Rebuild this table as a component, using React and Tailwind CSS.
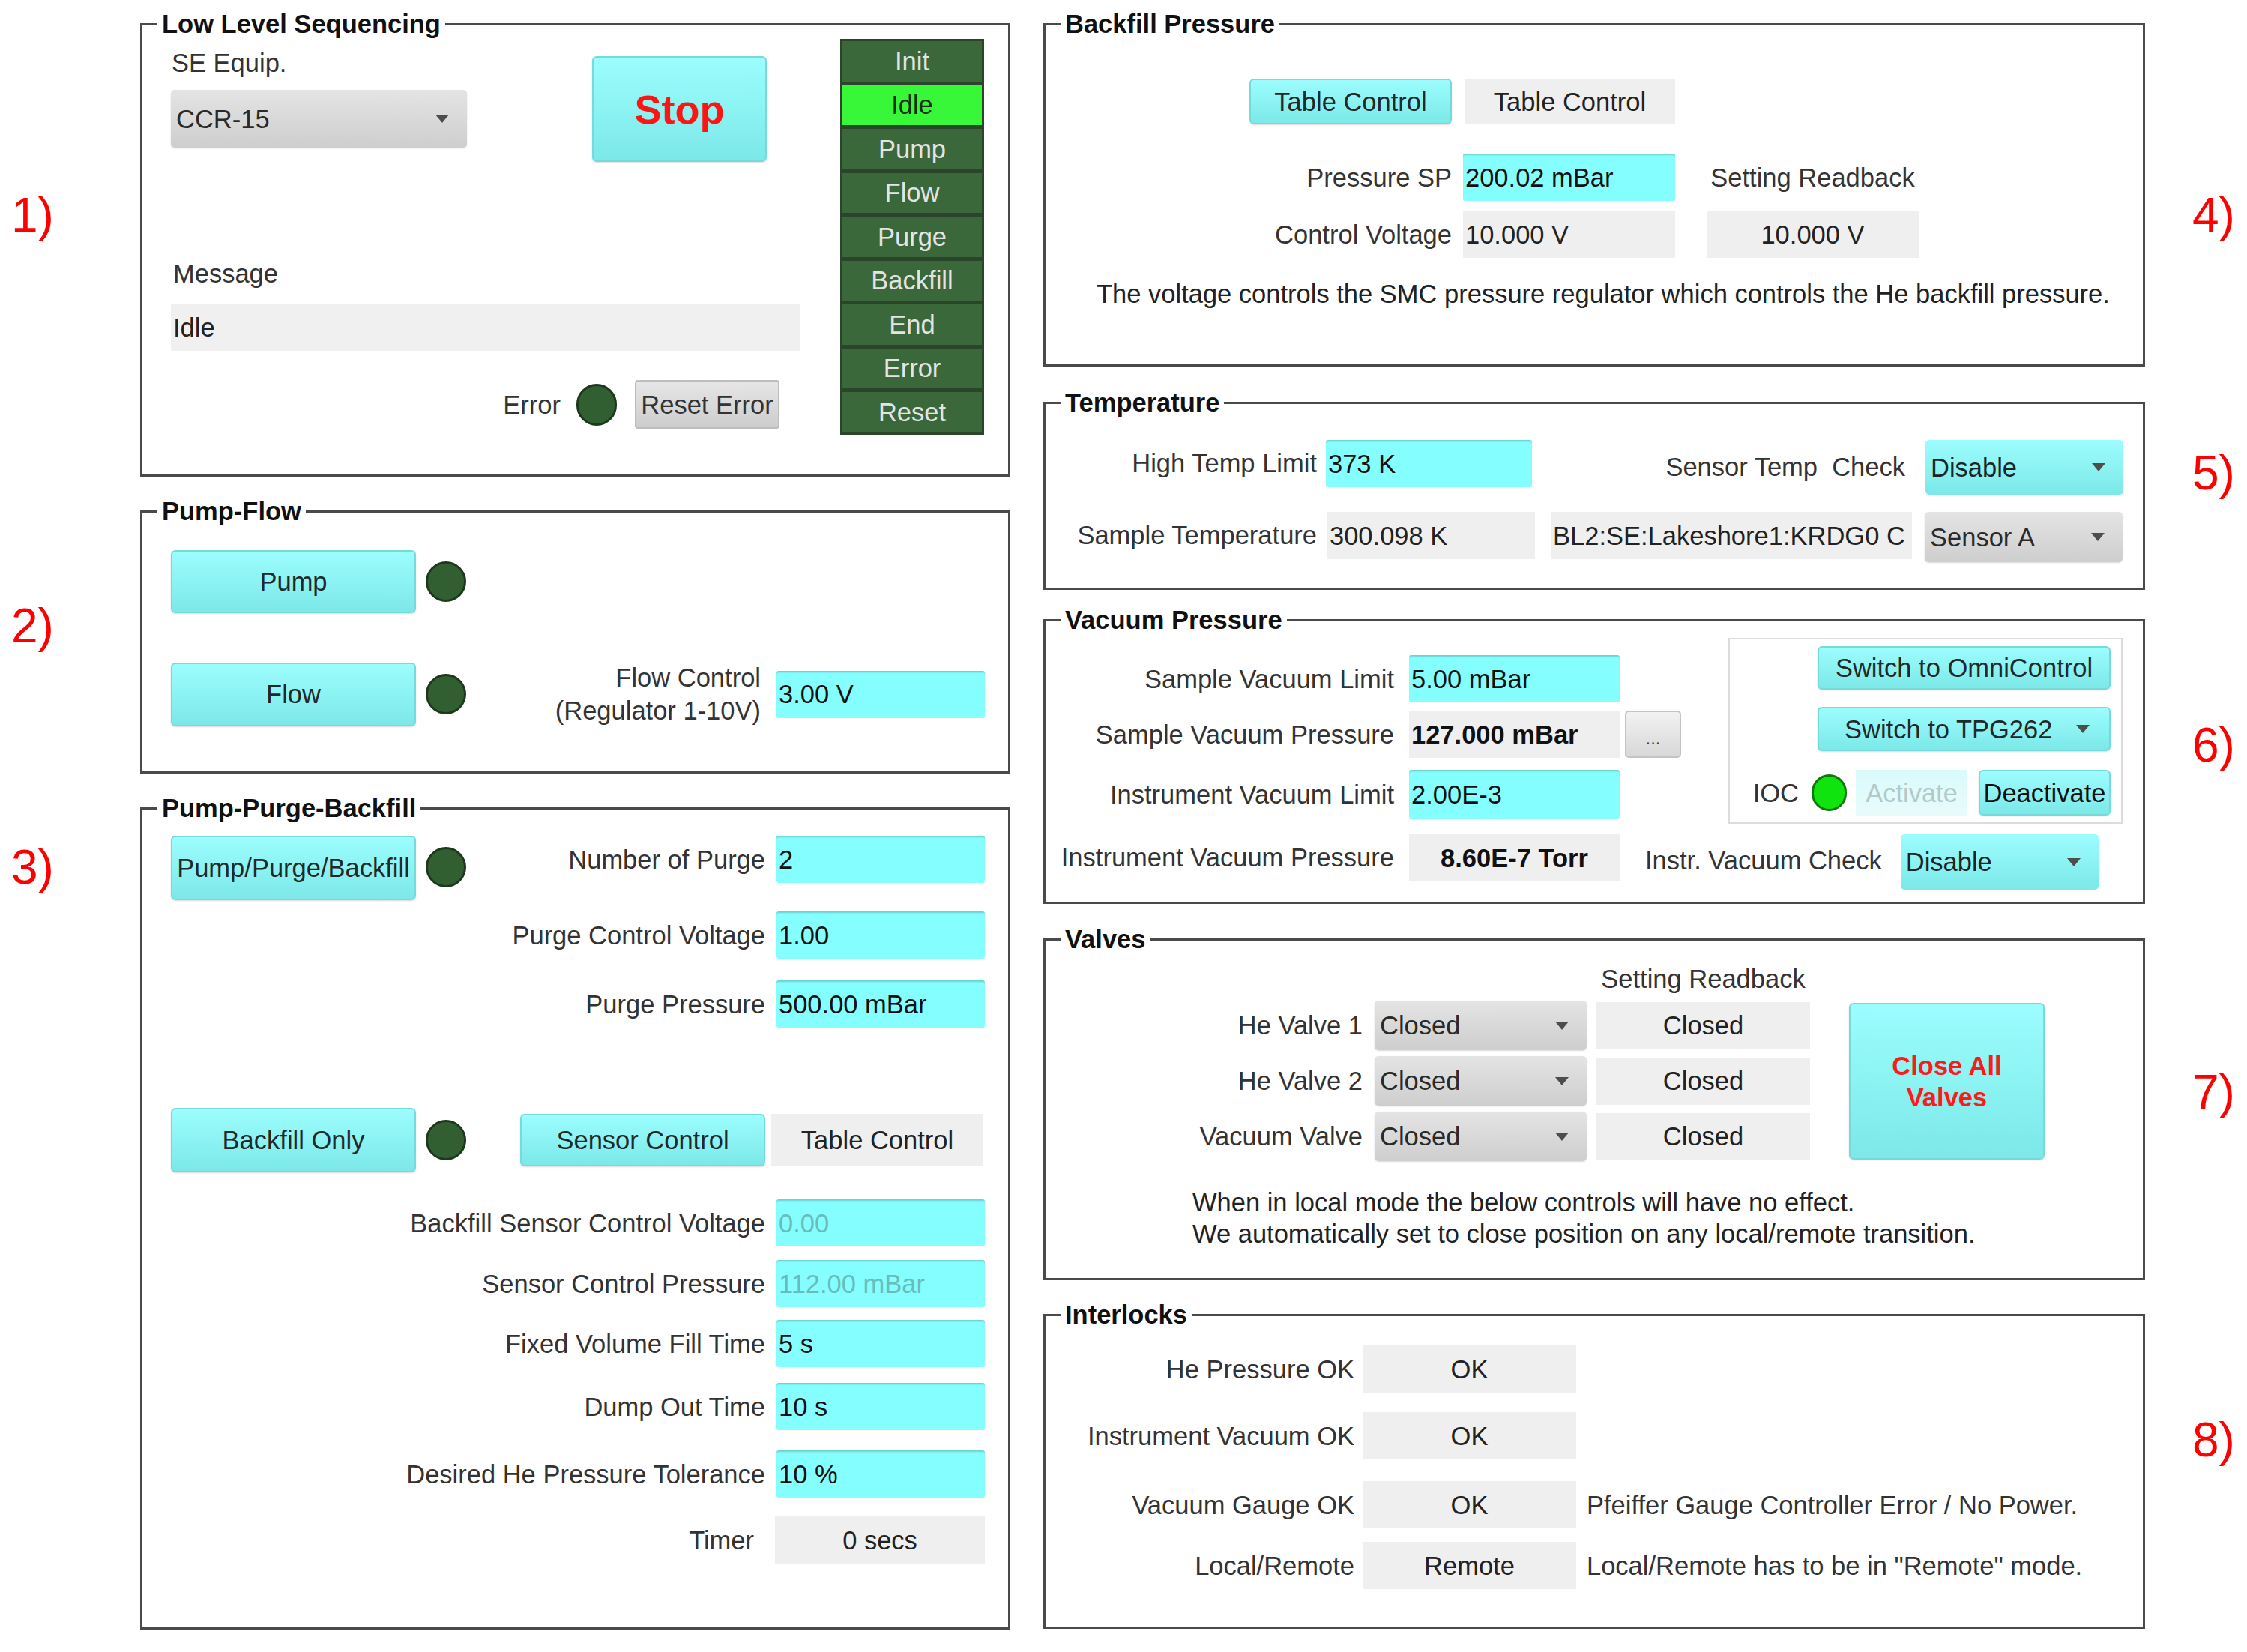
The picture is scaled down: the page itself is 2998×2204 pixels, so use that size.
import React from "react";

function Panel({ title, className = "", children }) {
  return (
    <div className={`relative border-[3px] border-[#4a4a4a] ${className}`}>
      <span className="absolute left-[20px] -top-[22px] bg-white px-[6px] text-[34.5px] leading-[40px] font-bold text-[#111] whitespace-nowrap">
        {title}
      </span>
      {children}
    </div>
  );
}

function CyanBtn({ className = "", children }) {
  return (
    <div
      className={`flex items-center justify-center rounded-[6px] border-2 border-[#74dada] bg-gradient-to-b from-[#9cfdfd] to-[#7ce8e8] text-[#1e2a2a] shadow-[0_1px_2px_rgba(0,0,0,0.15)] whitespace-nowrap ${className}`}
    >
      {children}
    </div>
  );
}

function Arrow() {
  return (
    <svg width="18" height="11" viewBox="0 0 18 11" className="shrink-0">
      <polygon points="0,0 18,0 9,11" fill="#4d4d4d" />
    </svg>
  );
}

function GrayDrop({ className = "", text }) {
  return (
    <div
      className={`flex items-center rounded-[5px] bg-gradient-to-b from-[#e4e4e4] to-[#cecece] pl-[7px] pr-[24px] text-[#2a2a2a] shadow-[0_1px_2px_rgba(0,0,0,0.15)] ${className}`}
    >
      <span>{text}</span>
      <span className="ml-auto flex">
        <Arrow />
      </span>
    </div>
  );
}

function CyanDrop({ className = "", text }) {
  return (
    <div
      className={`flex items-center rounded-[5px] bg-gradient-to-b from-[#9cfdfd] to-[#7ce8e8] pl-[7px] pr-[24px] text-[#1a2626] ${className}`}
    >
      <span>{text}</span>
      <span className="ml-auto flex">
        <Arrow />
      </span>
    </div>
  );
}

function Input({ className = "", faded = false, children }) {
  return (
    <div
      className={`flex items-center rounded-[3px] bg-[#84fefe] pl-[3px] shadow-[inset_0_3px_2px_-1px_rgba(0,0,0,0.18)] whitespace-nowrap ${
        faded ? "text-[#68bcbc]" : "text-[#111]"
      } ${className}`}
    >
      {children}
    </div>
  );
}

function Readout({ className = "", children }) {
  return (
    <div className={`flex items-center bg-[#efefef] whitespace-nowrap ${className}`}>
      {children}
    </div>
  );
}

function Led({ className = "" }) {
  return (
    <div
      className={`w-[54px] h-[54px] shrink-0 rounded-full bg-[#325f32] border-[3px] border-[#1e381e] ${className}`}
    />
  );
}

function Label({ className = "", children }) {
  return <div className={`text-right text-[#333] whitespace-nowrap ${className}`}>{children}</div>;
}

const states = ["Init", "Idle", "Pump", "Flow", "Purge", "Backfill", "End", "Error", "Reset"];

export default function App() {
  return (
    <div className="w-[2998px] h-[2204px] bg-white flex font-['Liberation_Sans',Arial,sans-serif] text-[34.5px] leading-[40px] text-[#222] overflow-hidden">
      {/* left gutter */}
      <div className="w-[187px] shrink-0 flex flex-col pl-[15px] text-[64px] leading-[64px] text-[#ff0000]">
        <div className="mt-[255px]">1)</div>
        <div className="mt-[484px]">2)</div>
        <div className="mt-[258px]">3)</div>
      </div>

      {/* left column */}
      <div className="w-[1161px] shrink-0 flex flex-col pt-[31px]">
        {/* 1 Low Level Sequencing */}
        <Panel title="Low Level Sequencing" className="h-[605px]">
          <div className="flex">
            <div className="w-[931px] pl-[38px] flex flex-col">
              <div className="flex mt-[30px]">
                <div className="flex flex-col w-[395px]">
                  <div className="h-[40px] pl-[1px] text-[#333]">SE Equip.</div>
                  <GrayDrop className="mt-[16px] w-[395px] h-[77px]" text="CCR-15" />
                </div>
                <CyanBtn className="ml-[167px] mt-[11px] w-[233px] h-[141px]">
                  <span className="text-[54px] leading-[60px] font-bold text-[#ff1414]">Stop</span>
                </CyanBtn>
              </div>
              <div className="mt-[129px] ml-[3px] h-[40px] text-[#333]">Message</div>
              <Readout className="mt-[20px] w-[839px] h-[63px] pl-[3px] bg-[#f0f0f0]">Idle</Readout>
              <div className="mt-[39px] w-[812px] flex items-center justify-end">
                <span className="text-[#333]">Error</span>
                <Led className="ml-[21px] w-[52px] h-[56px]" />
                <div className="ml-[24px] w-[193px] h-[65px] flex items-center justify-center rounded-[4px] border-2 border-[#bdbdbd] bg-gradient-to-b from-[#e6e6e6] to-[#cdcdcd] text-[#333] whitespace-nowrap">
                  Reset Error
                </div>
              </div>
            </div>
            <div className="mt-[18px] w-[192px] bg-[#2a452a] p-[3px] flex flex-col gap-[5px]">
              {states.map((s) => (
                <div
                  key={s}
                  className={
                    s === "Idle"
                      ? "h-[53.5px] flex items-center justify-center bg-[#38f738] text-[#123012]"
                      : "h-[53.5px] flex items-center justify-center bg-[#3a683a] text-[#e4e4e4]"
                  }
                >
                  {s}
                </div>
              ))}
            </div>
          </div>
        </Panel>

        {/* 2 Pump-Flow */}
        <Panel title="Pump-Flow" className="mt-[45px] h-[351px]">
          <div className="flex flex-col pl-[38px] pr-[31px]">
            <div className="mt-[50px] flex items-center">
              <CyanBtn className="w-[327px] h-[84px]">Pump</CyanBtn>
              <Led className="ml-[13px]" />
            </div>
            <div className="mt-[64px] flex items-center">
              <CyanBtn className="w-[327px] h-[85px]">Flow</CyanBtn>
              <Led className="ml-[13px]" />
              <Label className="ml-auto leading-[44px]">
                Flow Control
                <br />
                (Regulator 1-10V)
              </Label>
              <Input className="ml-[21px] w-[278px] h-[63px]">3.00 V</Input>
            </div>
          </div>
        </Panel>

        {/* 3 Pump-Purge-Backfill */}
        <Panel title="Pump-Purge-Backfill" className="mt-[45px] h-[1097px]">
          <div className="flex flex-col pl-[38px] pr-[31px]">
            <div className="mt-[35px] flex items-start">
              <CyanBtn className="w-[327px] h-[86px]">Pump/Purge/Backfill</CyanBtn>
              <Led className="ml-[13px] mt-[15px]" />
              <div className="ml-auto flex items-center">
                <Label className="mr-[15px]">Number of Purge</Label>
                <Input className="w-[278px] h-[63px]">2</Input>
              </div>
            </div>
            <div className="mt-[15px] flex items-center justify-end">
              <Label className="mr-[15px]">Purge Control Voltage</Label>
              <Input className="w-[278px] h-[63px]">1.00</Input>
            </div>
            <div className="mt-[29px] flex items-center justify-end">
              <Label className="mr-[15px]">Purge Pressure</Label>
              <Input className="w-[278px] h-[63px]">500.00 mBar</Input>
            </div>
            <div className="mt-[107px] flex items-center">
              <CyanBtn className="w-[327px] h-[86px]">Backfill Only</CyanBtn>
              <Led className="ml-[13px]" />
              <CyanBtn className="ml-[72px] w-[327px] h-[70px]">Sensor Control</CyanBtn>
              <Readout className="ml-[8px] w-[283px] h-[70px] justify-center">Table Control</Readout>
            </div>
            <div className="mt-[36px] flex items-center justify-end">
              <Label className="mr-[15px]">Backfill Sensor Control Voltage</Label>
              <Input faded className="w-[278px] h-[63px]">0.00</Input>
            </div>
            <div className="mt-[18px] flex items-center justify-end">
              <Label className="mr-[15px]">Sensor Control Pressure</Label>
              <Input faded className="w-[278px] h-[63px]">112.00 mBar</Input>
            </div>
            <div className="mt-[17px] flex items-center justify-end">
              <Label className="mr-[15px]">Fixed Volume Fill Time</Label>
              <Input className="w-[278px] h-[63px]">5 s</Input>
            </div>
            <div className="mt-[21px] flex items-center justify-end">
              <Label className="mr-[15px]">Dump Out Time</Label>
              <Input className="w-[278px] h-[63px]">10 s</Input>
            </div>
            <div className="mt-[27px] flex items-center justify-end">
              <Label className="mr-[15px]">Desired He Pressure Tolerance</Label>
              <Input className="w-[278px] h-[63px]">10 %</Input>
            </div>
            <div className="mt-[25px] flex items-center justify-end">
              <Label className="mr-[28px]">Timer</Label>
              <Readout className="w-[280px] h-[63px] justify-center">0 secs</Readout>
            </div>
          </div>
        </Panel>
      </div>

      {/* gap */}
      <div className="w-[44px] shrink-0" />

      {/* right column */}
      <div className="w-[1470px] shrink-0 flex flex-col pt-[31px]">
        {/* 4 Backfill Pressure */}
        <Panel title="Backfill Pressure" className="h-[458px]">
          <div className="flex flex-col">
            <div className="mt-[71px] ml-[272px] flex">
              <CyanBtn className="w-[270px] h-[61px]">Table Control</CyanBtn>
              <Readout className="ml-[17px] w-[281px] h-[61px] justify-center">Table Control</Readout>
            </div>
            <div className="mt-[39px] flex items-center">
              <Label className="w-[557px] pr-[15px]">Pressure SP</Label>
              <Input className="w-[283px] h-[63px]">200.02 mBar</Input>
              <div className="ml-[42px] w-[283px] text-center text-[#333] whitespace-nowrap">Setting Readback</div>
            </div>
            <div className="mt-[13px] flex items-center">
              <Label className="w-[557px] pr-[15px]">Control Voltage</Label>
              <Readout className="w-[283px] h-[63px] pl-[3px]">10.000 V</Readout>
              <Readout className="ml-[42px] w-[283px] h-[63px] justify-center">10.000 V</Readout>
            </div>
            <div className="mt-[28px] ml-[68px] text-[#222] whitespace-nowrap">
              The voltage controls the SMC pressure regulator which controls the He backfill pressure.
            </div>
          </div>
        </Panel>

        {/* 5 Temperature */}
        <Panel title="Temperature" className="mt-[47px] h-[251px]">
          <div className="flex flex-col pr-[26px]">
            <div className="mt-[48px] flex items-start">
              <Label className="w-[374px] pr-[12px] h-[63px] leading-[63px]">High Temp Limit</Label>
              <Input className="w-[275px] h-[63px]">373 K</Input>
              <div className="ml-auto h-[73px] leading-[73px] text-[#333] whitespace-pre">Sensor Temp  Check</div>
              <CyanDrop className="ml-[27px] w-[264px] h-[73px]" text="Disable" />
            </div>
            <div className="mt-[23px] flex items-start">
              <Label className="w-[374px] pr-[12px] h-[63px] leading-[63px]">Sample Temperature</Label>
              <Readout className="ml-[2px] w-[277px] h-[63px] pl-[3px]">300.098 K</Readout>
              <Readout className="ml-[21px] w-[482px] h-[63px] pl-[3px]">BL2:SE:Lakeshore1:KRDG0 C</Readout>
              <GrayDrop className="ml-[17px] w-[264px] h-[67px]" text="Sensor A" />
            </div>
          </div>
        </Panel>

        {/* 6 Vacuum Pressure */}
        <Panel title="Vacuum Pressure" className="mt-[39px] h-[380px]">
          <div className="flex flex-col">
            <div className="flex items-start">
              <div className="flex flex-col">
                <div className="mt-[45px] flex items-center">
                  <Label className="w-[485px] pr-[20px]">Sample Vacuum Limit</Label>
                  <Input className="w-[281px] h-[63px]">5.00 mBar</Input>
                </div>
                <div className="mt-[11px] flex items-center">
                  <Label className="w-[485px] pr-[20px]">Sample Vacuum Pressure</Label>
                  <Readout className="w-[281px] h-[63px] pl-[3px] font-bold text-[#111]">127.000 mBar</Readout>
                  <div className="ml-[7px] w-[75px] h-[63px] flex items-end justify-center pb-[12px] rounded-[5px] border-2 border-[#c4c4c4] bg-gradient-to-b from-[#f2f2f2] to-[#d8d8d8] text-[24px] leading-[24px] text-[#444]">
                    ...
                  </div>
                </div>
                <div className="mt-[16px] flex items-center">
                  <Label className="w-[485px] pr-[20px]">Instrument Vacuum Limit</Label>
                  <Input className="w-[281px] h-[65px]">2.00E-3</Input>
                </div>
              </div>
              <div className="ml-[63px] mt-[22px] w-[526px] h-[248px] border-2 border-[#dcdcdc] flex flex-col items-end pr-[14px]">
                <CyanBtn className="mt-[9px] w-[391px] h-[58px]">Switch to OmniControl</CyanBtn>
                <CyanBtn className="mt-[23px] w-[391px] h-[59px] justify-start pl-[34px] pr-[26px]">
                  <span>Switch to TPG262</span>
                  <span className="ml-auto flex">
                    <Arrow />
                  </span>
                </CyanBtn>
                <div className="mt-[25px] flex items-center">
                  <span className="text-[#333]">IOC</span>
                  <div className="ml-[17px] w-[47px] h-[49px] rounded-full bg-[#0fe40f] border-[3px] border-[#0b7a0b]" />
                  <div className="ml-[12px] w-[149px] h-[61px] flex items-center justify-center bg-gradient-to-b from-[#d8fbfb] to-[#e9fbfb] text-[#b3c9c9]">
                    Activate
                  </div>
                  <CyanBtn className="ml-[15px] w-[176px] h-[61px] text-[#111]">Deactivate</CyanBtn>
                </div>
              </div>
            </div>
            <div className="mt-[14px] flex items-start">
              <Label className="w-[485px] pr-[20px] h-[63px] leading-[63px]">Instrument Vacuum Pressure</Label>
              <Readout className="w-[281px] h-[63px] justify-center font-bold text-[#111]">8.60E-7 Torr</Readout>
              <div className="ml-[34px] h-[74px] leading-[70px] text-[#333] whitespace-nowrap">Instr. Vacuum Check</div>
              <CyanDrop className="ml-[25px] w-[264px] h-[74px]" text="Disable" />
            </div>
          </div>
        </Panel>

        {/* 7 Valves */}
        <Panel title="Valves" className="mt-[46px] h-[456px]">
          <div className="flex flex-col">
            <div className="mt-[31px] ml-[735px] w-[285px] text-center text-[#333] whitespace-nowrap">Setting Readback</div>
            <div className="mt-[9px] flex items-start">
              <div className="flex flex-col gap-[8px]">
                {["He Valve 1", "He Valve 2", "Vacuum Valve"].map((v) => (
                  <div key={v} className="flex items-center">
                    <Label className="w-[439px] pr-[16px]">{v}</Label>
                    <GrayDrop className="w-[283px] h-[66px]" text="Closed" />
                    <Readout className="ml-[13px] w-[285px] h-[63px] justify-center">Closed</Readout>
                  </div>
                ))}
              </div>
              <CyanBtn className="ml-[52px] mt-[3px] w-[261px] h-[209px]">
                <span className="text-center font-bold text-[#ff1a1a] leading-[42px]">
                  Close All
                  <br />
                  Valves
                </span>
              </CyanBtn>
            </div>
            <div className="mt-[34px] ml-[196px] leading-[42px] text-[#222] whitespace-nowrap">
              When in local mode the below controls will have no effect.
              <br />
              We automatically set to close position on any local/remote transition.
            </div>
          </div>
        </Panel>

        {/* 8 Interlocks */}
        <Panel title="Interlocks" className="mt-[45px] h-[420px]">
          <div className="flex flex-col">
            <div className="mt-[39px] flex items-center">
              <Label className="w-[423px] pr-[11px]">He Pressure OK</Label>
              <Readout className="w-[285px] h-[63px] justify-center">OK</Readout>
            </div>
            <div className="mt-[26px] flex items-center">
              <Label className="w-[423px] pr-[11px]">Instrument Vacuum OK</Label>
              <Readout className="w-[285px] h-[63px] justify-center">OK</Readout>
            </div>
            <div className="mt-[29px] flex items-center">
              <Label className="w-[423px] pr-[11px]">Vacuum Gauge OK</Label>
              <Readout className="w-[285px] h-[63px] justify-center">OK</Readout>
              <span className="ml-[14px] text-[#333] whitespace-nowrap">Pfeiffer Gauge Controller Error / No Power.</span>
            </div>
            <div className="mt-[18px] flex items-center">
              <Label className="w-[423px] pr-[11px]">Local/Remote</Label>
              <Readout className="w-[285px] h-[63px] justify-center">Remote</Readout>
              <span className="ml-[14px] text-[#333] whitespace-nowrap">Local/Remote has to be in "Remote" mode.</span>
            </div>
          </div>
        </Panel>
      </div>

      {/* right gutter */}
      <div className="w-[136px] shrink-0 flex flex-col pl-[63px] text-[64px] leading-[64px] text-[#ff0000]">
        <div className="mt-[255px]">4)</div>
        <div className="mt-[280px]">5)</div>
        <div className="mt-[299px]">6)</div>
        <div className="mt-[399px]">7)</div>
        <div className="mt-[400px]">8)</div>
      </div>
    </div>
  );
}
